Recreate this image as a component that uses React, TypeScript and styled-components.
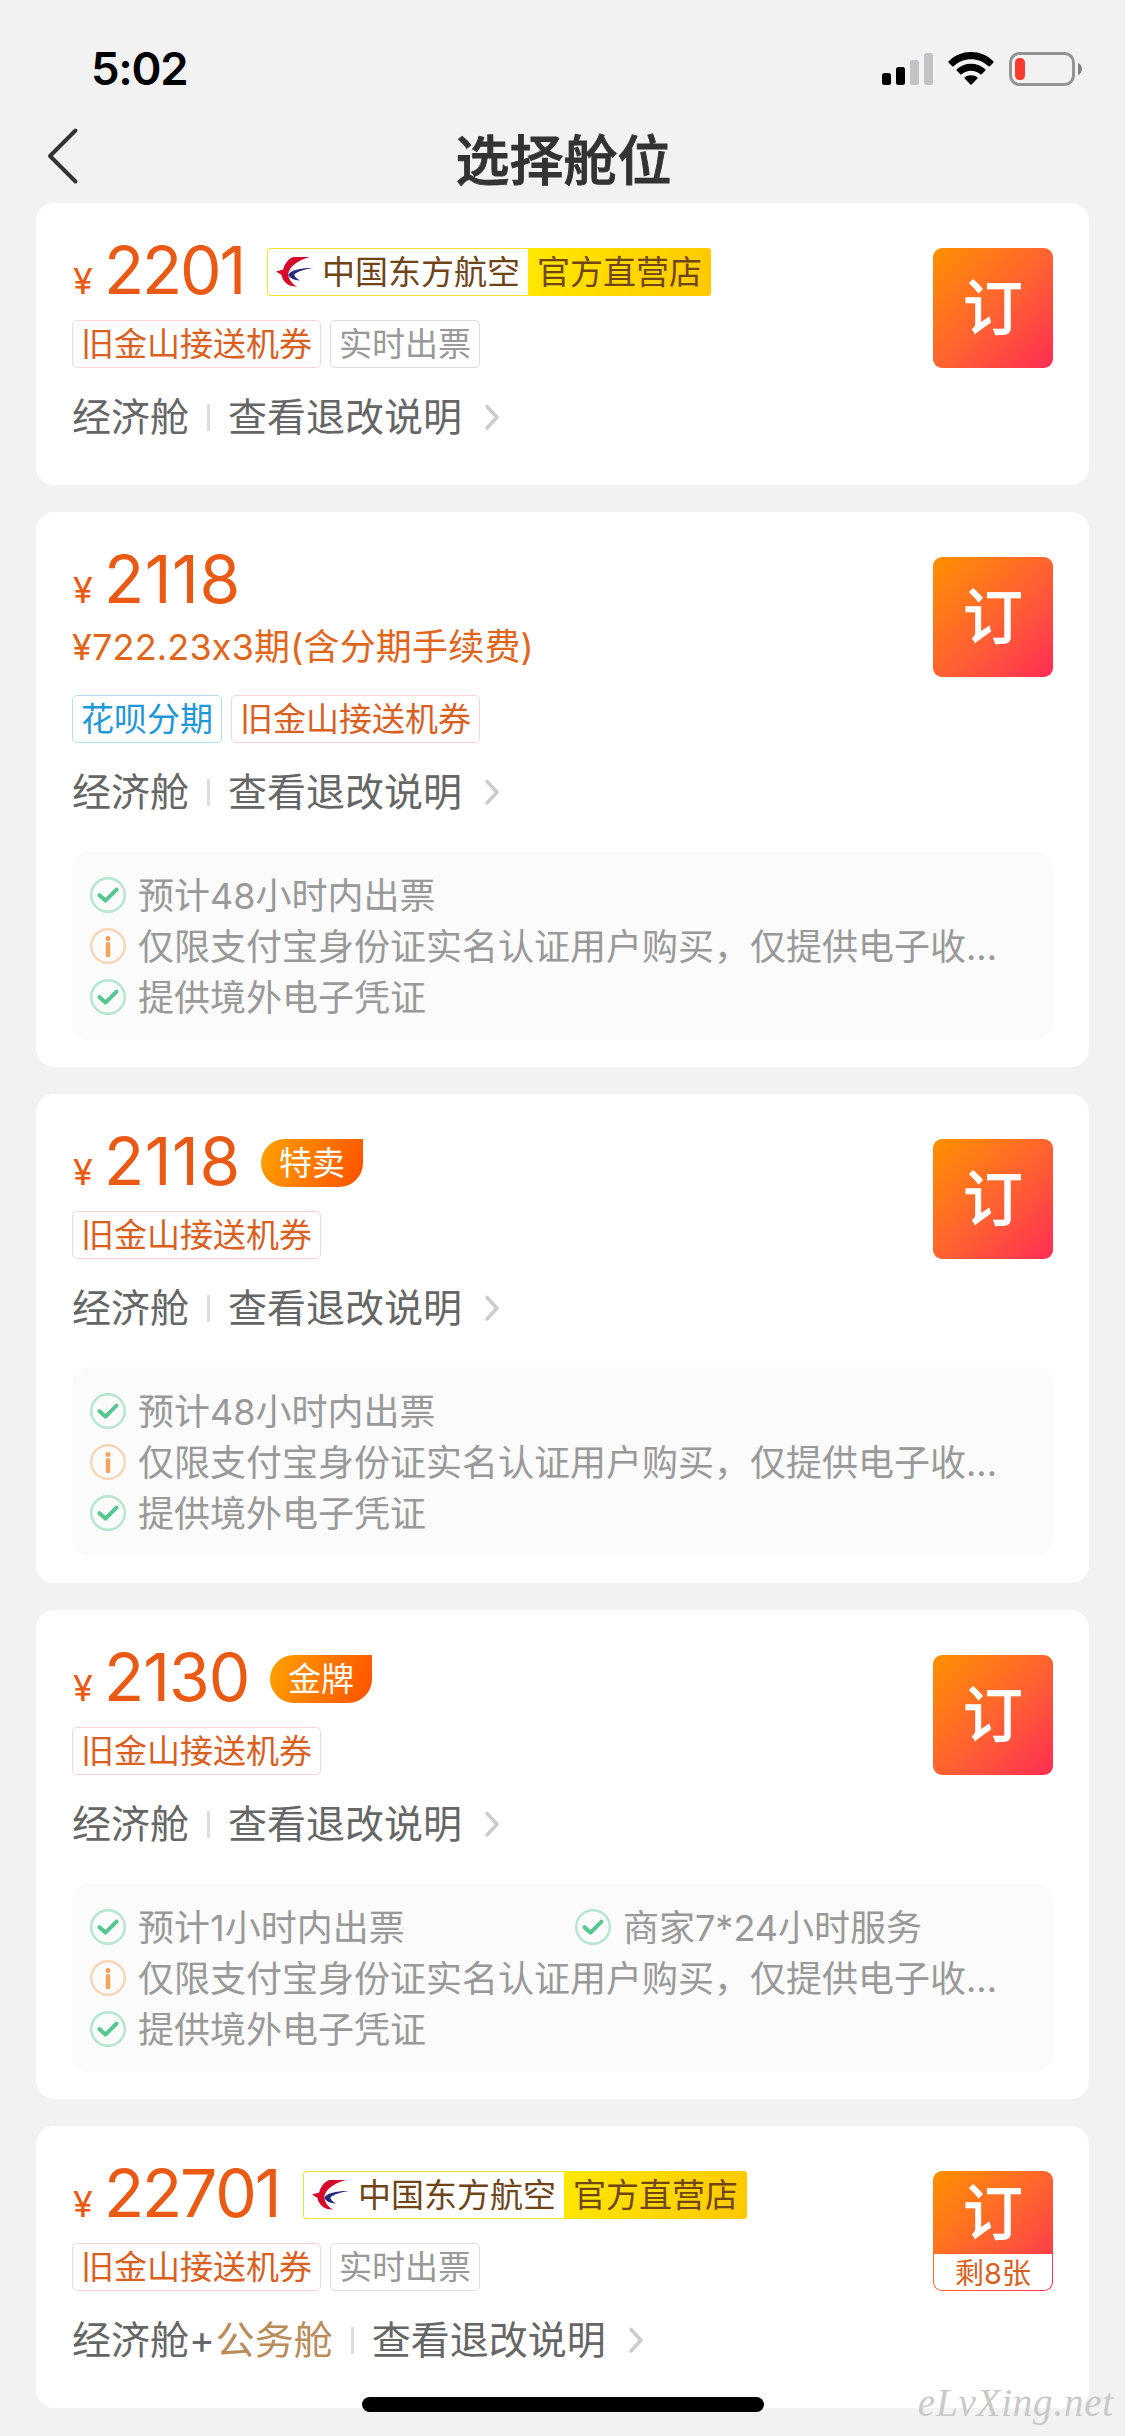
import React from "react";
import styled, { createGlobalStyle, css } from "styled-components";

const GlobalStyle = createGlobalStyle`
  * { box-sizing: border-box; }
  body {
    margin: 0;
    background: #f2f2f2;
    font-family: Inter, "Liberation Sans", "Noto Sans CJK SC", sans-serif;
    font-feature-settings: "calt" 0;
    -webkit-font-smoothing: antialiased;
  }
`;

const Screen = styled.div`
  position: relative;
  width: 1125px;
  height: 2436px;
  overflow: hidden;
  background: #f2f2f2;
  display: flex;
  flex-direction: column;
`;

const StatusBar = styled.div`
  height: 112px;
  padding: 26px 43px 0 91px;
  display: flex;
  align-items: center;
  justify-content: space-between;
`;

const Clock = styled.span`
  font-size: 45.5px;
  line-height: 60px;
  font-weight: 600;
  letter-spacing: -1.3px;
  color: #000;
`;

const StatusIcons = styled.div`
  display: flex;
  align-items: center;
  gap: 15px;
`;

const NavBar = styled.header`
  height: 91px;
  padding: 0 45px;
  display: grid;
  grid-template-columns: 60px 1fr 60px;
  align-items: center;
`;

const BackButton = styled.button`
  border: 0;
  background: none;
  padding: 0;
  width: 36px;
  height: 60px;
  margin-bottom: 4px;
  display: flex;
`;

const Title = styled.h1`
  margin: 9px 0 0 2px;
  text-align: center;
  font-size: 54px;
  line-height: 72px;
  font-weight: 500;
  -webkit-text-stroke: 0.9px #333;
  color: #333;
`;

const CardList = styled.main`
  display: flex;
  flex-direction: column;
  gap: 27px;
  padding: 0 36px;
`;

const Card = styled.article`
  background: #fff;
  border-radius: 18px;
  padding: 45px 36px 27px;
`;

const CardTop = styled.div`
  display: flex;
  justify-content: space-between;
  align-items: flex-start;
`;

const Details = styled.div`
  display: flex;
  flex-direction: column;
`;

const PriceRow = styled.div`
  height: 48px;
  display: flex;
  align-items: center;
`;

const Price = styled.div<{ $width: number }>`
  width: ${(p) => p.$width}px;
  padding: 6px 0 0 1px;
  display: flex;
  align-items: baseline;
  white-space: nowrap;
  color: #eb5a14;
  line-height: 48px;
`;

const Currency = styled.span`
  font-size: 36px;
  width: 31px;
`;

const Amount = styled.span<{ $tracking: number }>`
  font-size: 66px;
  letter-spacing: ${(p) => p.$tracking}px;
  font-kerning: none;
`;

const AirlineBadge = styled.div`
  height: 48px;
  display: flex;
  border-radius: 3px;
  overflow: hidden;
  font-size: 33px;
  line-height: 46px;
  color: #6f4518;
  white-space: nowrap;
`;

const AirlineName = styled.div`
  width: 261px;
  border: 1px solid #f5e02e;
  border-right: 0;
  border-radius: 3px 0 0 3px;
  padding-left: 8px;
  display: flex;
  align-items: center;
  gap: 9px;
`;

const OfficialStore = styled.div`
  padding: 1px 9px;
  background: linear-gradient(110deg, #ffe800, #ffc800);
`;

const Ribbon = styled.div`
  width: 102px;
  height: 48px;
  border-radius: 24px 0 24px 24px;
  background: linear-gradient(110deg, #ffa200, #ff5000);
  color: #fff;
  font-size: 33px;
  line-height: 48px;
  text-align: center;
`;

const Installment = styled.div`
  margin-top: 18px;
  height: 48px;
  font-size: 36px;
  line-height: 48px;
  letter-spacing: 0.17px;
  color: #e1661c;
  white-space: nowrap;
`;

const Tags = styled.div`
  display: flex;
  gap: 9px;
  margin-top: 24px;
`;

type Tone = "orange" | "blue" | "gray";

const tones = {
  orange: css`color: #d9601f; border-color: #f8d4d5;`,
  blue: css`color: #1f97d8; border-color: #b5def3;`,
  gray: css`color: #999; border-color: #ddd;`,
};

const Tag = styled.span<{ $tone: Tone }>`
  height: 48px;
  padding: 0 8px;
  border: 1px solid;
  border-radius: 5px;
  font-size: 33px;
  line-height: 46px;
  white-space: nowrap;
  ${(p) => tones[p.$tone]}
`;

const CabinRow = styled.div`
  margin: 22px 0 14px;
  height: 54px;
  display: flex;
  align-items: center;
  font-size: 39px;
  line-height: 54px;
  color: #666;
  white-space: nowrap;
`;

const Business = styled.span`
  margin-left: 1px;
  color: #b98d5b;
`;

const Divider = styled.i`
  width: 3px;
  height: 27px;
  margin: 0 18px;
  background: #ddd;
`;

const RowArrow = styled.svg`
  margin-left: 21px;
`;

const BookButton = styled.button`
  width: 120px;
  height: 120px;
  padding: 0;
  border: 0;
  border-radius: 9px;
  background: linear-gradient(135deg, #ff9000 0%, #ff5f33 55%, #ff2d55 100%);
  color: #fff;
  font-family: inherit;
  display: flex;
  flex-direction: column;
  overflow: hidden;
`;

const BookLabel = styled.span`
  flex: 1;
  width: 100%;
  display: flex;
  align-items: center;
  justify-content: center;
  font-size: 60px;
  font-weight: 500;
  line-height: 60px;
  -webkit-text-stroke: 0.4px #fff;
`;

const Remaining = styled.span`
  height: 36px;
  margin: 0 1px 1px;
  align-self: stretch;
  border-radius: 0 0 8px 8px;
  background: #fff;
  color: #d9601f;
  font-size: 29px;
  line-height: 39px;
  text-align: center;
`;

const Notes = styled.div`
  margin-top: 18px;
  height: 189px;
  border-radius: 18px;
  background: #fbfbfb;
  padding: 18px;
  display: grid;
  grid-template-columns: 485px 1fr;
  grid-auto-rows: 51px;
`;

const Note = styled.div<{ $wide?: boolean }>`
  grid-column: ${(p) => (p.$wide ? "1 / -1" : "auto")};
  display: flex;
  align-items: center;
  gap: 12px;
  font-size: 36px;
  line-height: 51px;
  color: #999;
  white-space: nowrap;
`;

const NoteText = styled.span`
  padding-top: 3px;
`;

const HomeIndicator = styled.div`
  position: absolute;
  left: 362px;
  top: 2397px;
  width: 402px;
  height: 15px;
  border-radius: 8px;
  background: #000;
`;

const Watermark = styled.div`
  position: absolute;
  right: 11px;
  top: 2378px;
  font-family: "Liberation Serif", serif;
  font-style: italic;
  font-size: 39px;
  line-height: 50px;
  letter-spacing: 0.8px;
  color: #c9c9c9;
`;

const SignalIcon = () => (
  <svg width="51" height="34" viewBox="0 0 51 34">
    <rect x="0" y="21" width="9" height="12" rx="2.5" />
    <rect x="14" y="15" width="9" height="18" rx="2.5" />
    <rect x="28" y="8" width="9" height="25" rx="2.5" fill="#c2c3c5" />
    <rect x="42" y="1" width="9" height="32" rx="2.5" fill="#c2c3c5" />
  </svg>
);

const WifiIcon = () => (
  <svg width="46" height="34" viewBox="0 0 46 34">
    <path d="M23 0C32 0 39.500 3.400 45.300 9.300Q46 10 45.300 10.700L41.800 14.200Q41.200 14.800 40.500 14.200C35.500 9.600 29.500 7.200 23 7.200S10.500 9.600 5.500 14.200Q4.800 14.800 4.200 14.200L.7 10.700Q0 10 .7 9.300C6.500 3.400 14 0 23 0Z" />
    <path d="M23 11.700C28.600 11.700 33.500 13.700 37.300 17.200Q38 17.900 37.300 18.600L33.700 22.200Q33.100 22.800 32.400 22.200C29.700 20 26.500 18.800 23 18.800S16.300 20 13.600 22.200Q12.900 22.800 12.300 22.200L8.700 18.600Q8 17.900 8.700 17.200C12.500 13.700 17.400 11.700 23 11.700Z" />
    <path d="M23 23.200C25.500 23.200 27.700 24 29.400 25.400Q30 26 29.400 26.600L23.600 32.500Q23 33.100 22.400 32.500L16.600 26.600Q16 26 16.600 25.400C18.300 24 20.500 23.200 23 23.200Z" />
  </svg>
);

const BatteryIcon = () => (
  <svg width="73" height="34" viewBox="0 0 73 34">
    <rect x="1.500" y="1.500" width="63" height="31" rx="9" fill="none" stroke="#949494" strokeWidth="3" />
    <rect x="6" y="6" width="10" height="22" rx="4.500" fill="#f93b31" />
    <path d="M69 11C74.300 13 74.300 21 69 23Z" fill="#808080" />
  </svg>
);

const AirlineLogo = () => (
  <svg width="37" height="30" viewBox="0 0 37 30">
    <path d="M34 0H17C12 2 8.500 7 7.200 12.500L0 14.500 5.500 18C6.500 25 13 30 21 29.500 16 27 12.500 22 12.200 17 13.500 10 20 4 34 0Z" fill="#d7092b" />
    <path d="M37 11C27 10.500 15 12.500 12.200 17.800 14 21.500 18.500 23.500 24 23.400 20.500 21.500 18.500 19.500 18.300 17.500 22 14.300 29 12 37 11Z" fill="#29297d" />
  </svg>
);

const CheckIcon = () => (
  <svg width="36" height="36" viewBox="0 0 36 36" fill="none">
    <circle cx="18" cy="18" r="16.800" stroke="#b5e6ce" strokeWidth="2.400" />
    <path d="M9.500 18.200 15.500 23.600 26.500 12.600" stroke="#55c791" strokeWidth="4" strokeLinecap="round" strokeLinejoin="round" />
  </svg>
);

const InfoIcon = () => (
  <svg width="36" height="36" viewBox="0 0 36 36" fill="none">
    <circle cx="18" cy="18" r="16.800" stroke="#f9d5b5" strokeWidth="2.400" />
    <circle cx="18" cy="10.500" r="2.500" fill="#f4a35f" />
    <path d="M18 16.300V27" stroke="#f4a35f" strokeWidth="4.600" strokeLinecap="round" />
  </svg>
);

const Chevron = () => (
  <RowArrow width="18" height="28" viewBox="0 0 18 28" fill="none">
    <path d="M4 3.500 14 14.300 4 25" stroke="#ccc" strokeWidth="3.600" strokeLinecap="round" strokeLinejoin="round" />
  </RowArrow>
);

interface NoteData {
  text: string;
  info?: boolean;
  wide?: boolean;
}

interface Fare {
  amount: string;
  tracking: number;
  priceWidth: number;
  airline?: boolean;
  ribbon?: string;
  installment?: string;
  tags: { text: string; tone: Tone }[];
  business?: boolean;
  left?: string;
  notes?: NoteData[];
}

const transfer = { text: "旧金山接送机券", tone: "orange" as Tone };
const instant = { text: "实时出票", tone: "gray" as Tone };
const commonNotes: NoteData[] = [
  { text: "仅限支付宝身份证实名认证用户购买，仅提供电子收...", info: true, wide: true },
  { text: "提供境外电子凭证", wide: true },
];

const fares: Fare[] = [
  { amount: "2201", tracking: -2.2, priceWidth: 195, airline: true, tags: [transfer, instant] },
  {
    amount: "2118",
    tracking: 0.5,
    priceWidth: 189,
    installment: "¥722.23x3期(含分期手续费)",
    tags: [{ text: "花呗分期", tone: "blue" }, transfer],
    notes: [{ text: "预计48小时内出票", wide: true }, ...commonNotes],
  },
  {
    amount: "2118",
    tracking: 0.5,
    priceWidth: 189,
    ribbon: "特卖",
    tags: [transfer],
    notes: [{ text: "预计48小时内出票", wide: true }, ...commonNotes],
  },
  {
    amount: "2130",
    tracking: -1,
    priceWidth: 198,
    ribbon: "金牌",
    tags: [transfer],
    notes: [{ text: "预计1小时内出票" }, { text: "商家7*24小时服务" }, ...commonNotes],
  },
  {
    amount: "22701",
    tracking: -2.2,
    priceWidth: 231,
    airline: true,
    tags: [transfer, instant],
    business: true,
    left: "剩8张",
  },
];

const FareCard = ({ fare }: { fare: Fare }) => (
  <Card>
    <CardTop>
      <Details>
        <PriceRow>
          <Price $width={fare.priceWidth}>
            <Currency>¥</Currency>
            <Amount $tracking={fare.tracking}>{fare.amount}</Amount>
          </Price>
          {fare.airline && (
            <AirlineBadge>
              <AirlineName>
                <AirlineLogo />
                <span>中国东方航空</span>
              </AirlineName>
              <OfficialStore>官方直营店</OfficialStore>
            </AirlineBadge>
          )}
          {fare.ribbon && <Ribbon>{fare.ribbon}</Ribbon>}
        </PriceRow>
        {fare.installment && <Installment>{fare.installment}</Installment>}
        <Tags>
          {fare.tags.map((tag) => (
            <Tag key={tag.text} $tone={tag.tone}>{tag.text}</Tag>
          ))}
        </Tags>
        <CabinRow>
          <span>经济舱{fare.business && <>+<Business>公务舱</Business></>}</span>
          <Divider />
          <span>查看退改说明</span>
          <Chevron />
        </CabinRow>
      </Details>
      <BookButton>
        <BookLabel>订</BookLabel>
        {fare.left && <Remaining>{fare.left}</Remaining>}
      </BookButton>
    </CardTop>
    {fare.notes && (
      <Notes>
        {fare.notes.map((note) => (
          <Note key={note.text} $wide={note.wide}>
            {note.info ? <InfoIcon /> : <CheckIcon />}
            <NoteText>{note.text}</NoteText>
          </Note>
        ))}
      </Notes>
    )}
  </Card>
);

export default function App() {
  return (
    <>
      <GlobalStyle />
      <Screen>
        <StatusBar>
          <Clock>5:02</Clock>
          <StatusIcons>
            <SignalIcon />
            <WifiIcon />
            <BatteryIcon />
          </StatusIcons>
        </StatusBar>
        <NavBar>
          <BackButton aria-label="返回">
            <svg width="36" height="60" viewBox="0 0 36 60" fill="none">
              <path d="M30.500 4.500 5 30 30.500 55.500" stroke="#333" strokeWidth="4" strokeLinecap="round" strokeLinejoin="round" />
            </svg>
          </BackButton>
          <Title>选择舱位</Title>
        </NavBar>
        <CardList>
          {fares.map((fare, index) => (
            <FareCard key={index} fare={fare} />
          ))}
        </CardList>
        <HomeIndicator />
        <Watermark>eLvXing.net</Watermark>
      </Screen>
    </>
  );
}
